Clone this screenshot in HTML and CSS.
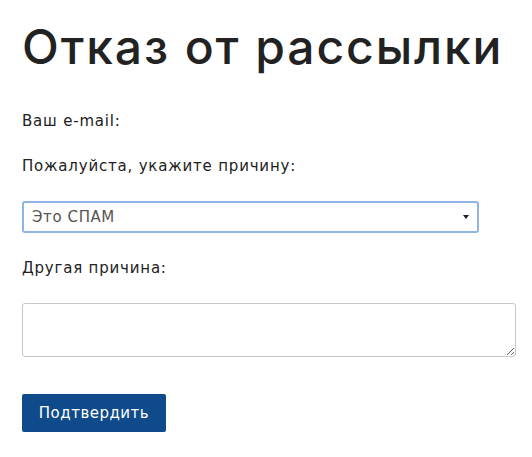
FILE: index.html
```html
<!DOCTYPE html>
<html lang="ru">
<head>
    <meta charset="UTF-8">
    <meta name="viewport" content="width=device-width, initial-scale=1.0">
    <title>Отказ от рассылки</title>
    <link rel="stylesheet" href="styles.css">
</head>
<body>
    <div class="unsub">
        <h1 class="unsub-title">Отказ от рассылки</h1>
        <form class="unsub-form">
            <!-- адрес подписчика -->
            <p class="unsub-label">Ваш e-mail:</p>

            <!-- причина -->
            <label class="unsub-label" for="reason">Пожалуйста, укажите причину:</label>
            <div class="select-wrap">
                <select id="reason" class="unsub-select">
                    <option>Это СПАМ</option>
                    <option>Слишком часто</option>
                    <option>Неинтересно</option>
                    <option>Другое</option>
                </select>
                <span class="select-caret"></span>
            </div>

            <label class="unsub-label" for="other">Другая причина:</label>
            <textarea id="other" class="unsub-text"></textarea>

            <button type="button" class="unsub-btn">Подтвердить</button>
        </form>
    </div>
</body>
</html>
```

FILE: styles.css
```css
*{
    margin: 0;
    padding: 0;
    box-sizing: border-box;
}
body{
    background: #fff;
    color: #222;
    font-family: "DejaVu Sans", "Open Sans", sans-serif;
}
.unsub{
    padding: 16px 16px 0 22px;
}
.unsub-title{
    font-family: "Inter", "DejaVu Sans", sans-serif;
    font-size: 48px;
    font-weight: 500;
    line-height: 62px;
    color: #222;
    letter-spacing: 1.9px;
}
.unsub-form{
    display: flex;
    flex-direction: column;
    align-items: flex-start;
    padding-top: 33px;
}
.unsub-label{
    display: block;
    font-size: 15px;
    line-height: 20px;
    letter-spacing: 0.8px;
    color: #222;
    margin-bottom: 25px;
}
.select-wrap{
    position: relative;
    width: 457px;
    margin-bottom: 25px;
}
.unsub-select{
    display: block;
    width: 100%;
    height: 32px;
    padding: 0 24px 0 8px;
    border: 2px solid #8fb4e6;
    border-radius: 3px;
    background: #fff;
    color: #555;
    font-family: inherit;
    font-size: 15px;
    letter-spacing: 0.6px;
    appearance: none;
    -webkit-appearance: none;
    outline: none;
}
.select-caret{
    position: absolute;
    right: 10px;
    top: 14px;
    width: 0;
    height: 0;
    border-left: 3px solid transparent;
    border-right: 3px solid transparent;
    border-top: 4px solid #222;
}
.unsub-text{
    display: block;
    width: 494px;
    height: 54px;
    border: 1px solid #c8c8c8;
    border-radius: 3px;
    margin-bottom: 37px;
    resize: vertical;
    font-family: inherit;
}
.unsub-btn{
    width: 144px;
    height: 38px;
    border: none;
    border-radius: 2px;
    background: #0f4b8a;
    color: #fff;
    font-family: inherit;
    font-size: 15px;
    letter-spacing: 0.5px;
    cursor: pointer;
}
```
